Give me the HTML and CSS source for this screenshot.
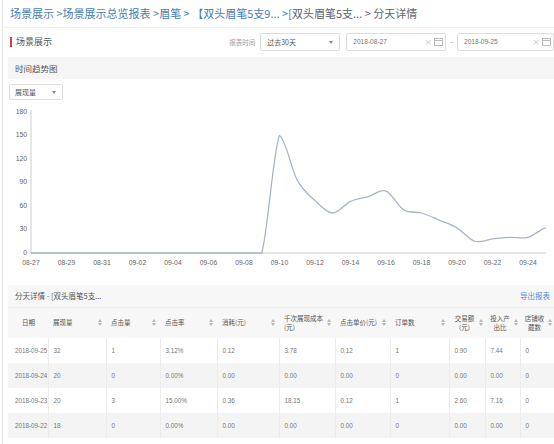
FILE: index.html
```html
<!DOCTYPE html>
<html>
    <head>
        <meta charset="utf-8">
        <title>分天详情</title>
        <link rel="stylesheet" href="styles.css">
    </head>
    <body>
        <div class="page">
            <div class="crumbs">
                <a>场景展示</a> &gt;<a>场景展示总览报表</a> &gt;<a>眉笔</a> &gt; <a>【双头眉笔5支9...</a> &gt;<span class="current">[双头眉笔5支... &gt; 分天详情</span>
            </div>

            <div class="toolbar">
                <h2 class="section-title">场景展示</h2>
                <div class="filters">
                    <span class="filter-label">报表时间</span>
                    <div class="select range">过去30天<span class="caret"></span></div>
                    <div class="date-input">
                        <span class="date-text">2018-08-27</span>
                        <span class="clear">×</span>
                        <svg class="cal" width="9" height="8" viewBox="0 0 9 8"><rect x="0.5" y="0.5" width="8" height="7" fill="none" stroke="#bbb"/><line x1="0.5" y1="2.5" x2="8.5" y2="2.5" stroke="#bbb"/></svg>
                    </div>
                    <span class="dash">-</span>
                    <div class="date-input last">
                        <span class="date-text">2018-09-25</span>
                        <span class="clear">×</span>
                        <svg class="cal" width="9" height="8" viewBox="0 0 9 8"><rect x="0.5" y="0.5" width="8" height="7" fill="none" stroke="#bbb"/><line x1="0.5" y1="2.5" x2="8.5" y2="2.5" stroke="#bbb"/></svg>
                    </div>
                </div>
            </div>

            <div class="panel-head">时间趋势图</div>
            <div class="select metric">展现量<span class="caret"></span></div>

            <!-- viewBox uses page coordinates: 0 at y=253, 30 units = 23.5px, one day = 17.75px -->
            <svg class="chart" width="551" height="170" viewBox="3 103 551 170">
                <g class="y-labels">
                    <text x="27" y="112">180</text>
                    <text x="27" y="135.5">150</text>
                    <text x="27" y="159">120</text>
                    <text x="27" y="182.5">90</text>
                    <text x="27" y="206">60</text>
                    <text x="27" y="229.5">30</text>
                    <text x="27" y="253">0</text>
                </g>
                <line class="axis" x1="31" y1="110" x2="31" y2="253"/>
                <line class="axis" x1="31" y1="253" x2="546" y2="253"/>
                <g class="x-labels">
                    <text x="31" y="263">08-27</text>
                    <text x="66.5" y="263">08-29</text>
                    <text x="102" y="263">08-31</text>
                    <text x="137.5" y="263">09-02</text>
                    <text x="173" y="263">09-04</text>
                    <text x="208.5" y="263">09-06</text>
                    <text x="244" y="263">09-08</text>
                    <text x="279.5" y="263">09-10</text>
                    <text x="315" y="263">09-12</text>
                    <text x="350.5" y="263">09-14</text>
                    <text x="386" y="263">09-16</text>
                    <text x="421.5" y="263">09-18</text>
                    <text x="457" y="263">09-20</text>
                    <text x="492.5" y="263">09-22</text>
                    <text x="528" y="263">09-24</text>
                </g>
                <path class="trend" d="M31 253 L261.75 253
                    C267.67 233.4 273.58 147.6 279.5 135.5
                    C285.42 138 291.33 169.3 297.25 180.15
                    C303.17 191 309.08 195 315 200.5
                    C320.92 206 326.83 212.9 332.75 213
                    C338.67 213.1 344.58 204 350.5 201.3
                    C356.42 198.6 362.33 198.3 368.25 196.6
                    C374.17 194.9 380.08 188.9 386 191.1
                    C391.92 193.3 397.83 206.3 403.75 209.9
                    C409.67 213.6 415.58 211.3 421.5 213
                    C427.42 214.7 433.33 217.6 439.25 220.1
                    C445.17 222.6 451.08 224.4 457 227.9
                    C462.92 231.4 468.83 239.4 474.75 241.25
                    C480.67 243.1 486.58 239.6 492.5 238.9
                    C498.42 238.2 504.33 237.6 510.25 237.3
                    C516.17 237 522.08 238.9 528 237.3
                    C533.92 235.7 539.83 229.5 545.75 227.9"/>
            </svg>

            <div class="panel-head table-title">
                <span>分天详情 - [双头眉笔5支...</span>
                <a class="export">导出报表</a>
            </div>

            <table class="daily">
                <colgroup>
                    <col style="width:40px"><col style="width:58px"><col style="width:54px"><col style="width:57px">
                    <col style="width:62px"><col style="width:56px"><col style="width:55px"><col style="width:59px">
                    <col style="width:36px"><col style="width:35px"><col style="width:34px">
                </colgroup>
                <tr>
                    <th class="center">日期</th>
                    <th><div class="th"><span>展现量</span><i class="sort"></i></div></th>
                    <th><div class="th"><span>点击量</span><i class="sort"></i></div></th>
                    <th><div class="th"><span>点击率</span><i class="sort"></i></div></th>
                    <th><div class="th"><span>消耗(元)</span><i class="sort"></i></div></th>
                    <th><div class="th"><span>千次展现成本<br>(元)</span><i class="sort"></i></div></th>
                    <th><div class="th"><span>点击单价(元)</span><i class="sort"></i></div></th>
                    <th><div class="th"><span>订单数</span><i class="sort"></i></div></th>
                    <th class="narrow"><div class="th mid"><span>交易额<br>(元)</span><i class="sort"></i></div></th>
                    <th class="narrow"><div class="th mid"><span>投入产<br>出比</span><i class="sort"></i></div></th>
                    <th class="narrow"><div class="th mid"><span>店铺收<br>藏数</span><i class="sort"></i></div></th>
                </tr>
                <tr>
                    <td>2018-09-25</td><td>32</td><td>1</td><td>3.12%</td><td>0.12</td><td>3.78</td><td>0.12</td><td>1</td><td>0.90</td><td>7.44</td><td>0</td>
                </tr>
                <tr class="alt">
                    <td>2018-09-24</td><td>20</td><td>0</td><td>0.00%</td><td>0.00</td><td>0.00</td><td>0.00</td><td>0</td><td>0.00</td><td>0.00</td><td>0</td>
                </tr>
                <tr>
                    <td>2018-09-23</td><td>20</td><td>3</td><td>15.00%</td><td>0.36</td><td>18.15</td><td>0.12</td><td>1</td><td>2.60</td><td>7.16</td><td>0</td>
                </tr>
                <tr class="alt">
                    <td>2018-09-22</td><td>18</td><td>0</td><td>0.00%</td><td>0.00</td><td>0.00</td><td>0.00</td><td>0</td><td>0.00</td><td>0.00</td><td>0</td>
                </tr>
            </table>
        </div>
    </body>
</html>
```

FILE: styles.css
```css
* {
    box-sizing: border-box;
}

body {
    margin: 0;
    font-family: "Noto Sans CJK SC", sans-serif;
    color: #555555;
    background-color: #ffffff;
}

.page {
    margin-left: 2px;
    width: 552px;
    height: 444px;
    border-left: 1px solid #e4e4e4;
    overflow: hidden;
}

/* breadcrumb */
.crumbs {
    height: 28px;
    padding: 4px 0 0 7px;
    font-size: 11px;
    line-height: 18px;
    color: #4a7db4;
    white-space: nowrap;
    border-bottom: 1px solid #f0f0f0;
}

.crumbs .current {
    color: #5a6470;
}

/* title + filters */
.toolbar {
    display: flex;
    align-items: center;
    height: 27px;
    padding-left: 7px;
}

.section-title {
    margin: 0;
    padding-left: 4px;
    font-size: 9px;
    font-weight: normal;
    line-height: 10px;
    color: #555555;
    border-left: 2px solid #e0393e;
}

.filters {
    display: flex;
    align-items: center;
    margin-left: auto;
}

.filter-label {
    margin-right: 5px;
    font-size: 6.5px;
    color: #a0a0a0;
}

.select {
    position: relative;
    height: 18px;
    padding-left: 6px;
    font-size: 7px;
    line-height: 16px;
    color: #555555;
    border: 1px solid #dddddd;
    border-radius: 2px;
    background-color: #ffffff;
}

.select .caret {
    position: absolute;
    right: 6px;
    top: 7px;
    border-top: 3px solid #888888;
    border-left: 2.5px solid transparent;
    border-right: 2.5px solid transparent;
}

.select.range {
    width: 80px;
}

.date-input {
    display: flex;
    align-items: center;
    width: 100px;
    height: 18px;
    margin-left: 6px;
    padding: 0 2px 0 6px;
    border: 1px solid #dddddd;
    border-radius: 2px;
}

.date-input.last {
    width: 97px;
    margin-left: 4px;
}

.date-text {
    flex: 1;
    font-family: "Liberation Sans", "Noto Sans CJK SC", sans-serif;
    font-size: 6.6px;
    color: #777777;
}

.clear {
    margin-right: 2px;
    font-size: 8px;
    line-height: 8px;
    color: #c0c0c0;
}

.cal {
    display: block;
}

.dash {
    margin-left: 4px;
    font-size: 8px;
    color: #999999;
}

/* panels */
.panel-head {
    height: 22px;
    margin: 2px 0 0 5px;
    padding-left: 7px;
    font-size: 8.5px;
    line-height: 22px;
    color: #555555;
    background-color: #f5f5f5;
}

.select.metric {
    width: 54px;
    height: 16px;
    margin: 5px 0 0 6px;
    padding-left: 5px;
    line-height: 14px;
}

.select.metric .caret {
    top: 6px;
}

/* chart */
.chart {
    display: block;
    margin-top: 3px;
    font-family: "Liberation Sans", sans-serif;
}

.chart text {
    font-size: 6.8px;
    fill: #666666;
    dominant-baseline: middle;
}

.chart .y-labels text {
    text-anchor: end;
}

.chart .x-labels text {
    text-anchor: middle;
}

.chart .axis {
    stroke: #cccccc;
    stroke-width: 1;
}

.chart .trend {
    fill: none;
    stroke: #a7b5c9;
    stroke-width: 1.3;
}

/* table */
.table-title {
    display: flex;
    justify-content: space-between;
    margin-top: 12px;
    padding-right: 4px;
    font-size: 7.5px;
    background-color: #f7f7f7;
}

.export {
    color: #4a8fd6;
}

table.daily {
    width: 546px;
    margin-left: 5px;
    table-layout: fixed;
    border-collapse: collapse;
    font-size: 6.5px;
}

table.daily th {
    height: 30px;
    padding: 0 4px 0 5px;
    font-weight: normal;
    text-align: left;
    line-height: 9px;
    color: #555555;
    background-color: #f7f7f7;
    border-top: 1px solid #eeeeee;
}

table.daily th.center {
    text-align: center;
}

table.daily th.narrow {
    padding: 0 2px 0 2px;
}

.th {
    display: flex;
    align-items: center;
    justify-content: space-between;
    gap: 1px;
}

.th span {
    white-space: nowrap;
}

.th.mid span {
    flex: 1;
    text-align: center;
}

.sort {
    display: inline-flex;
    flex-direction: column;
    flex-shrink: 0;
    gap: 1px;
}

.sort::before {
    content: "";
    border-bottom: 3px solid #b8b8b8;
    border-left: 2.5px solid transparent;
    border-right: 2.5px solid transparent;
}

.sort::after {
    content: "";
    border-top: 3px solid #b8b8b8;
    border-left: 2.5px solid transparent;
    border-right: 2.5px solid transparent;
}

table.daily td {
    height: 25px;
    padding: 0 4px 0 5px;
    font-family: "Liberation Sans", "Noto Sans CJK SC", sans-serif;
    font-size: 6.3px;
    color: #777777;
    white-space: nowrap;
    border-left: 1px solid #ececec;
}

table.daily td:first-child {
    padding-left: 7px;
    border-left: none;
}

table.daily tr.alt td {
    background-color: #f4f4f4;
}
```
